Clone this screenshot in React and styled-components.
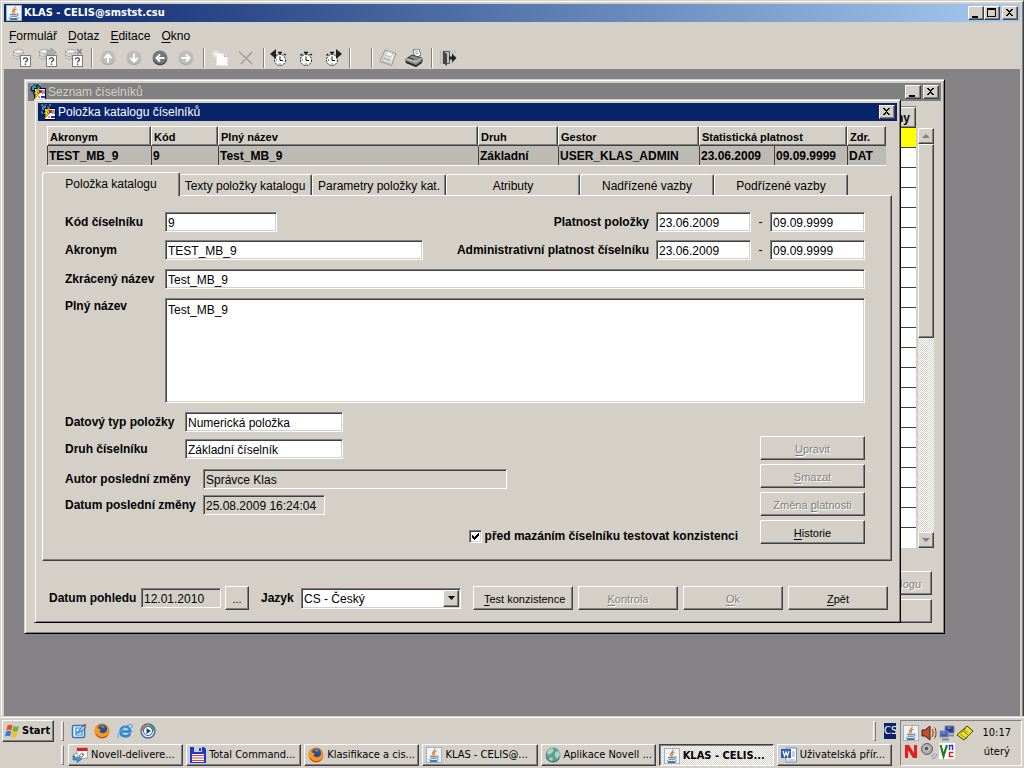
import React from 'react';
import styled, {createGlobalStyle, css} from 'styled-components';

const face = '#d4d0c8';
const uiFont = '"Liberation Sans", Arial, sans-serif';
const sysFont = '"DejaVu Sans Condensed", "DejaVu Sans", sans-serif';

const checkMark = `url("data:image/svg+xml,%3Csvg xmlns='http://www.w3.org/2000/svg' width='9' height='9' shape-rendering='crispEdges'%3E%3Cpath d='M1 3v3h1v1h1v1h1v-1h1v-1h1v-1h1v-1h1v-3h-1v1h-1v1h-1v1h-1v1h-1v-1h-1v-1z'/%3E%3C/svg%3E")`;
const checker = 'repeating-conic-gradient(#fff 0 25%, #d4d0c8 0 50%)';

const raised = css`
    border: 1px solid;
    border-color: #fff #404040 #404040 #fff;
    box-shadow: inset -1px -1px #808080;
`;
const sunken = css`
    border: 1px solid;
    border-color: #808080 #fff #fff #808080;
    box-shadow: inset 1px 1px #404040, inset -1px -1px ${face};
`;

/* ---------- icons ---------- */

const Icon = ({size = 16, w, h, children}) => (
    <svg width={w || size} height={h || size} viewBox={`0 0 ${w || size} ${h || size}`} aria-hidden="true">
        {children}
    </svg>
);

const JavaIcon = () => (
    <Icon>
        <rect x="0.5" y="0.5" width="15" height="15" fill="#eef3f8" stroke="#9db2c6" />
        <path d="M9 1.5C9.8 3.8 6 4.6 6.6 6.8L7.6 8.4M10.6 4C8 5 7.6 6 8.8 7.6" fill="none" stroke="#e8781e" strokeWidth="1.2" />
        <path d="M4 9.3H10.5M4.6 11.2H10M10.6 9c2.4-.4 2 2-.4 2.3M2.8 12.8c2 1 8 1 9.8 0M4 14.5h7.5" fill="none" stroke="#4a6d94" strokeWidth="1" />
    </Icon>
);

const FormIcon = () => (
    <Icon>
        <circle cx="6" cy="5.500" r="5.500" fill="#101878" />
        <path d="M2 3l2-2 2 1v2L4 6H2zM7 2l3 1v2H8zM1 7l2 1v2L1 9z" fill="#3a9a8a" />
        <path d="M1 1h2M9 1h2M5 0h2" stroke="#8ec8e0" />
        <path d="M4.500 4.500h11v11h-11z" fill="#fff" stroke="#000" />
        <path d="M9 6h3v3H9z" fill="#d81818" />
        <path d="M12 7h3M12 9h3" stroke="#2030d0" />
        <path d="M11 12h4v2h-4z" fill="#2030d0" />
        <path d="M8 13h2" stroke="#d81818" />
        <path d="M8 4L3.500 10H6l-2 5.500L9.500 9H7l3-5z" fill="#ffe800" stroke="#303000" strokeWidth=".6" />
    </Icon>
);

const QueryIcon = ({mark}) => (
    <Icon w={20} h={20}>
        <path d="M1.500 3.500c0-3 10-3 10 0v6c0 2-10 2-10 0z" fill="#dddbd6" stroke="#9c9a95" strokeDasharray="2 1" />
        <ellipse cx="6.500" cy="3.500" rx="4.500" ry="2" fill="#f4f3f0" stroke="#a5a39e" strokeWidth=".8" />
        <path d="M7 5.500v5M9.500 5v5M2 7.500c2 1.500 7 1.500 9 0" fill="none" stroke="#b0aeaa" />
        {mark === 'arrow' && <path d="M9 2.500h4V0l5.500 4.500L13 8.500V6l-4 .5z" fill="#b0aea9" stroke="#8c8a86" strokeWidth=".6" />}
        {mark === 'cross' && <path d="M13 1l5 5M18 1l-5 5" stroke="#85837e" strokeWidth="1.500" />}
        <rect x="8.500" y="7.500" width="10" height="11" fill="#fff" stroke="#7c7a76" />
        <path d="M11.500 11.500c0-2.500 4.500-2 4 .3-.2 1.300-2 1-2 2.700M13.500 15.500v1.500" fill="none" stroke="#505050" strokeWidth="1.400" />
    </Icon>
);

const ArrowIcon = ({turn, on}) => (
    <Icon>
        <circle cx="8" cy="8" r="7.500" fill={on ? '#77767a' : '#bfbdb9'} />
        <path d="M1.500 10a7 7 0 0 0 13 0" fill="none" stroke={on ? '#3c3c40' : '#a8a6a2'} />
        <g transform={`rotate(${turn} 8 8)`}>
            <path d="M8 12.500V4.500M4.500 8L8 4.500 11.500 8" fill="none" stroke="#fff" strokeWidth="2" />
        </g>
    </Icon>
);

const NewIcon = () => (
    <Icon>
        <path d="M4.500 3.500H12l3.500 3V15.500h-11z" fill="#fff" stroke="#e6e4df" />
        <path d="M12 3.500v3h3.500" fill="#d8d6d2" stroke="#c2c0bc" />
        <path d="M4 0v8M0 4h8M1 1l6 6M7 1L1 7" stroke="#f7f6f2" />
    </Icon>
);

const DeleteIcon = () => (
    <Icon>
        <path d="M1 2l13 12M14 2L3 14" stroke="#a3a19d" strokeWidth="1.800" fill="none" />
        <path d="M1 3l12 12" stroke="#fff" strokeWidth=".4" />
    </Icon>
);

const ClockIcon = ({side}) => (
    <Icon w={20} h={18}>
        <circle cx="10" cy="11" r="5.500" fill="#fff" stroke="#222" strokeDasharray="2 1" />
        <path d="M8 3.500h4M10 3v3M14 5l2 1M6 5L4.500 6.500" stroke="#111" strokeWidth="1.300" fill="none" />
        <path d="M10 7.500V11.500h3M6 11h1M10 14.500v1" stroke="#111" fill="none" />
        {side === 'left' && <path d="M6 0v10L0 5z" fill="#222" />}
        {side === 'right' && <path d="M14 0v10l6-5z" fill="#222" />}
    </Icon>
);

const SaveIcon = () => (
    <Icon w={18} h={18}>
        <path d="M6 1l11 3.500-4.500 12L1 12.500z" fill="#dedcd8" stroke="#999793" />
        <path d="M8 2l6 2-2 4-6-2z" fill="#f6f5f2" stroke="#b0aeaa" strokeWidth=".7" />
        <path d="M5 9l7 2.500-1.500 4L3.500 13z" fill="#c8c6c2" stroke="#a3a19d" strokeWidth=".7" />
        <path d="M4 11l6 2M14 6l-3 8" stroke="#fff" strokeWidth=".8" />
    </Icon>
);

const PrintIcon = () => (
    <Icon w={18} h={18}>
        <path d="M8 1l6-1 2 6-6 3z" fill="#fff" stroke="#555" strokeWidth=".8" />
        <path d="M10 3l3-.5M10.500 5l3-.7" stroke="#777" strokeWidth=".8" />
        <path d="M1 10l6-4 10 3v4l-6 4.500-10-4z" fill="#8d8c8a" stroke="#222" strokeWidth=".8" />
        <path d="M1 10l10 3 6-4" fill="none" stroke="#d8d6d2" />
        <path d="M1 12l10 4 6-4v2l-6 4-10-4z" fill="#2c2c2c" />
        <path d="M3 8.500l6 2" stroke="#333" />
    </Icon>
);

const ExitIcon = () => (
    <Icon w={18} h={18}>
        <path d="M1 2h16M1 4h3M1 6h3M1 8h3M1 10h3M1 12h3M1 14h3M12 4h5M12 14h4" stroke="#a5a3a0" strokeDasharray="1 1" />
        <path d="M4.500 2.500h6v12h-6z" fill="#c2c0bc" stroke="#555" />
        <path d="M4 2l4 3v12l-4-3z" fill="#444" />
        <path d="M10 7.500h3V4.500l4.500 4.500-4.500 4.500v-3h-3z" fill="#222" />
    </Icon>
);

const FirefoxIcon = () => (
    <Icon>
        <circle cx="8" cy="8" r="7.500" fill="#e07818" />
        <circle cx="8.500" cy="6.500" r="4.700" fill="#28508c" />
        <path d="M6 3c2-1 4-.5 5 1L8.500 5z" fill="#5c98cc" />
        <path d="M1 3.500c1.500.3 3 1 3.500 2.300L7 6.500 5.500 8c.5 2.500 4 2.800 6 1.500 2-1.500 2-4 1-6.500 3 3 3 8-.5 10.800C7 17 0 13.500.5 8z" fill="#f59a22" />
        <path d="M2 11c2 4 8 5 11.500 1.500" fill="none" stroke="#b83c10" />
    </Icon>
);

const IeIcon = () => (
    <Icon>
        <path d="M13 10.500c-1.500 4-9.500 4-9.500-2 0-6 9.500-6.500 9.800 0H5" fill="none" stroke="#2a86d8" strokeWidth="2.600" />
        <path d="M1.500 15C-1 11 9 1 14.500 1.500c1.300.5.8 2 0 3.500" fill="none" stroke="#58a8e8" strokeWidth="1.200" />
    </Icon>
);

const MailIcon = () => (
    <Icon>
        <rect x="1.500" y="2.500" width="12" height="12" rx="1.500" fill="#e8f4fc" stroke="#2878c0" strokeWidth="1.500" />
        <path d="M10 5H5v7h6V8M6 10l6-7 2.500 1.500L8 10z" fill="#fff" stroke="#3088c8" strokeWidth="1.200" />
        <path d="M12 2l2-1.500 1.500 1.500L14 4z" fill="#d84820" />
    </Icon>
);

const MediaIcon = () => (
    <Icon>
        <circle cx="8" cy="8" r="7" fill="#e6ecf4" stroke="#44689c" strokeWidth="1.400" />
        <path d="M8 1.500A6.500 6.500 0 0 1 14.500 8H11z" fill="#48a848" />
        <path d="M8 1.500A6.500 6.500 0 0 0 1.500 8H5z" fill="#e87030" />
        <circle cx="8" cy="8" r="4.500" fill="#fff" stroke="#2c58a8" />
        <path d="M6.500 5v6L11 8z" fill="#1c3c98" />
    </Icon>
);

const WindowsIcon = () => (
    <Icon>
        <path d="M2.500 2.500c2-1 3.500-1 5 0L6.300 7.500c-1.500-1-3-1-5 0z" fill="#e8501c" />
        <path d="M8.500 3c2 1 3.500 1 5.500 0l-1.200 5c-2 1-3.500 1-5.300 0z" fill="#6cb82c" />
        <path d="M1.200 8.500c2-1 3.500-1 5 0L5 13.500c-1.500-1-3-1-5 0z" fill="#3c78d8" />
        <path d="M7.200 9c2 1 3.500 1 5.300 0l-1.200 5c-2 1-3.500 1-5.300 0z" fill="#f4bc1c" />
    </Icon>
);

const NovellIcon = () => (
    <Icon>
        <path d="M5 1h10.500v10H5z" fill="#fff" stroke="#909090" strokeWidth=".7" />
        <path d="M5 1h10.500v3H5z" fill="#e02020" />
        <path d="M7 9l3-3 2 1-2 3zM9 6l3 3" fill="none" stroke="#707070" strokeWidth=".8" />
        <path d="M1 8l4-2 3 4-4 2z" fill="#fff" stroke="#777" strokeWidth=".7" />
        <path d="M1 9v4h4v2.500l5-3.500-5-2.500V11H3V9z" fill="#38a0e0" stroke="#1c5c90" strokeWidth=".6" />
    </Icon>
);

const DiskIcon = () => (
    <Icon>
        <path d="M0 0h14l2 2v14H0z" fill="#1c3cc8" />
        <path d="M4 0h8v5H4z" fill="#c8d0e0" />
        <path d="M9 1h2v3H9z" fill="#1c3cc8" />
        <path d="M2 7h12v8H2z" fill="#fff" />
        <path d="M2 8.500h12M2 11h12M2 13.500h12" stroke="#e04040" />
    </Icon>
);

const GlobeIcon = () => (
    <Icon>
        <circle cx="8" cy="8" r="7.500" fill="#5f9c94" />
        <path d="M3 3l4-2 2 2-2 3-3 2-2-2zM10 5l4-1 1 4-3 4-2-3zM5 10l3 1-1 3-3-1z" fill="#a8d4c4" />
        <path d="M1 10a7.500 7.500 0 0 0 13 2" fill="none" stroke="#3c6c70" />
    </Icon>
);

const WordIcon = () => (
    <Icon>
        <path d="M5 1h10.500v14H5z" fill="#fff" stroke="#6888c0" />
        <path d="M11 5h3M11 7h3M11 9h3M7 13h7" stroke="#88a0c8" />
        <path d="M0 2h10v9H0z" fill="#2c5cb4" />
        <path d="M2 4l1.500 5L5 5l1.500 4L8 4" fill="none" stroke="#fff" strokeWidth="1.200" />
    </Icon>
);

const SoundIcon = () => (
    <Icon>
        <path d="M1 5h3l5-4v14l-5-4H1z" fill="#c05030" stroke="#501808" />
        <path d="M11 4c1.500 2 1.500 6 0 8M13.500 2.500c2 3 2 8 0 11" fill="none" stroke="#803010" />
    </Icon>
);

const NetworkIcon = () => (
    <Icon>
        <path d="M6 1h9v7H6z" fill="#2c3c8c" stroke="#8088a0" />
        <path d="M1 6h8v6H1z" fill="#4058b8" stroke="#8890a8" />
        <path d="M3 14.500h7M9 10.500h6" stroke="#8088a0" strokeWidth="2" />
        <path d="M8 3h4M2.500 8h4" stroke="#90a8e8" />
    </Icon>
);

const TagIcon = () => (
    <Icon>
        <path d="M0 10L10 1l6 5-9 9z" fill="#f0e020" stroke="#404000" />
        <path d="M3 9l7 5M6 6l6 5M9 3l-5 5" stroke="#807800" strokeWidth=".8" />
        <path d="M8 5l3 2-2 2z" fill="#fff" stroke="#555" strokeWidth=".5" />
    </Icon>
);

const RedNIcon = () => (
    <Icon>
        <path d="M2 2v13h3V7l5 8h4V2h-3v8L6 2z" fill="#e81c1c" />
    </Icon>
);

const SpeakerIcon = () => (
    <Icon>
        <circle cx="6" cy="6" r="5.500" fill="#a8a8a8" stroke="#606060" />
        <circle cx="5.500" cy="5.500" r="2.500" fill="#585858" stroke="#ddd" />
        <path d="M10 13c2 0 3-1 3.500-3M11 15.500c3 0 4.500-2 4.700-4.500" fill="none" stroke="#7088d0" />
    </Icon>
);

const VncIcon = () => (
    <Icon>
        <rect width="16" height="16" fill="#fff" />
        <path d="M1.500 2L4.500 13 8 2" fill="none" stroke="#188018" strokeWidth="2.200" />
        <path d="M10.500 7V2.500h3V7" fill="none" stroke="#2038d0" strokeWidth="1.500" />
        <path d="M14.500 9.500h-4v4h4" fill="none" stroke="#d82020" strokeWidth="1.500" />
    </Icon>
);

const glyphs = {
    minimize: <path d="M3 9h6v2H3z" />,
    maximize: <path d="M2 1h9v9H2zM3 3v6h7V3z" fillRule="evenodd" />,
    close: <path d="M3 2h2v1h1v1h1v-1h1v-1h2v1h-1v1h-1v1h-1v1h1v1h1v1h1v1h-2v-1h-1v-1h-1v1h-1v1h-2v-1h1v-1h1v-1h1v-1h-1v-1h-1v-1h-1z" />,
};

/* ---------- small building blocks ---------- */

const CaptionButton = ({kind}) => (
    <CaptionButtonStyled type="button" aria-label={kind}>
        <svg width="14" height="12" viewBox="0 0 14 12" shapeRendering="crispEdges">{glyphs[kind]}</svg>
    </CaptionButtonStyled>
);

const Field = ({id, label, labelWidth, width, readOnly, value}) => (
    <FieldRow>
        <Label htmlFor={id} $width={labelWidth}>{label}</Label>
        <TextBox id={id} $width={width} $flat={readOnly} readOnly={readOnly} defaultValue={value} />
    </FieldRow>
);

const DateRange = ({id, label, from, to}) => (
    <FieldRow>
        <Label htmlFor={id} $end>{label}</Label>
        <TextBox id={id} $width={95} defaultValue={from} />
        <Dash>-</Dash>
        <TextBox aria-label={label} $width={95} defaultValue={to} />
    </FieldRow>
);

const columns = [104, 67, null, 80, 141, 75, 73, 39];
const tabs = ['Texty položky katalogu', 'Parametry položky kat.', 'Atributy', 'Nadřízené vazby', 'Podřízené vazby'];
const tasks = [
    {icon: <NovellIcon />, text: 'Novell-delivere...'},
    {icon: <DiskIcon />, text: 'Total Command...'},
    {icon: <FirefoxIcon />, text: 'Klasifikace a cis...'},
    {icon: <JavaIcon />, text: 'KLAS - CELIS@...'},
    {icon: <GlobeIcon />, text: 'Aplikace Novell ...'},
    {icon: <JavaIcon />, text: 'KLAS - CELIS...', active: true},
    {icon: <WordIcon />, text: 'Uživatelská přír...'},
];

function Toolbar() {
    return (
        <ToolbarStyled>
            <Tool><QueryIcon /></Tool>
            <Tool><QueryIcon mark="arrow" /></Tool>
            <Tool><QueryIcon mark="cross" /></Tool>
            <Divider />
            <Tool><ArrowIcon turn={0} /></Tool>
            <Tool><ArrowIcon turn={180} /></Tool>
            <Tool><ArrowIcon turn={270} on /></Tool>
            <Tool><ArrowIcon turn={90} /></Tool>
            <Divider />
            <Tool><NewIcon /></Tool>
            <Tool><DeleteIcon /></Tool>
            <Divider />
            <Tool><ClockIcon side="left" /></Tool>
            <Tool><ClockIcon /></Tool>
            <Tool><ClockIcon side="right" /></Tool>
            <Divider />
            <Divider $wide />
            <Tool><SaveIcon /></Tool>
            <Tool><PrintIcon /></Tool>
            <Divider />
            <Tool><ExitIcon /></Tool>
        </ToolbarStyled>
    );
}

function ListWindow() {
    return (
        <MdiWindow $left={20} $top={10} $width={921}>
            <TitleBar $inactive>
                <FormIcon />
                <WindowTitle>Seznam číselníků</WindowTitle>
                <CaptionButton kind="minimize" />
                <CaptionButton kind="close" />
            </TitleBar>
            <ListBody>
                <ListGrid>
                    <ListHead>ny</ListHead>
                    <ListRow $selected />
                    {Array.from({length: 20}, (_, i) => <ListRow key={i} />)}
                </ListGrid>
                <ScrollBar>
                    <ScrollButton type="button" aria-label="up">
                        <svg width="8" height="4"><path d="M4 0l4 4H0z" fill="#808080" /></svg>
                    </ScrollButton>
                    <ScrollThumb />
                    <ScrollTrack />
                    <ScrollButton type="button" aria-label="down">
                        <svg width="8" height="4"><path d="M0 0h8L4 4z" fill="#808080" /></svg>
                    </ScrollButton>
                </ScrollBar>
            </ListBody>
            <ListActions>
                <Button disabled $width={105} $end>logu</Button>
                <Button disabled $width={105} />
            </ListActions>
        </MdiWindow>
    );
}

function DetailWindow() {
    return (
        <MdiWindow $left={30} $top={30} $width={867}>
            <TitleBar>
                <FormIcon />
                <WindowTitle>Položka katalogu číselníků</WindowTitle>
                <CaptionButton kind="close" />
            </TitleBar>
            <Summary>
                <colgroup>
                    {columns.map((width, i) => <col key={i} width={width || undefined} />)}
                </colgroup>
                <thead>
                    <tr>
                        <th>Akronym</th>
                        <th>Kód</th>
                        <th>Plný název</th>
                        <th>Druh</th>
                        <th>Gestor</th>
                        <th colSpan={2}>Statistická platnost</th>
                        <th>Zdr.</th>
                    </tr>
                </thead>
                <tbody>
                    <tr>
                        <td>TEST_MB_9</td>
                        <td>9</td>
                        <td>Test_MB_9</td>
                        <td>Základní</td>
                        <td>USER_KLAS_ADMIN</td>
                        <td>23.06.2009</td>
                        <td>09.09.9999</td>
                        <td>DAT</td>
                    </tr>
                </tbody>
            </Summary>
            <TabList role="tablist">
                <Tab type="button" role="tab" aria-selected="true" $active>Položka katalogu</Tab>
                {tabs.map(tab => <Tab key={tab} type="button" role="tab">{tab}</Tab>)}
            </TabList>
            <Panel>
                <PanelTop>
                    <Stack $gap={8}>
                        <Field id="kod" label="Kód číselníku" labelWidth={100} width={112} value="9" />
                        <Field id="akronym" label="Akronym" labelWidth={100} width={258} value="TEST_MB_9" />
                    </Stack>
                    <Stack $gap={8}>
                        <DateRange id="platnost" label="Platnost položky" from="23.06.2009" to="09.09.9999" />
                        <DateRange id="admin" label="Administrativní platnost číselníku" from="23.06.2009" to="09.09.9999" />
                    </Stack>
                </PanelTop>
                <Field id="zkraceny" label="Zkrácený název" labelWidth={100} value="Test_MB_9" />
                <FieldRow $top>
                    <Label htmlFor="plny" $width={100}>Plný název</Label>
                    <TextArea id="plny" defaultValue="Test_MB_9" />
                </FieldRow>
                <PanelBottom>
                    <Stack $gap={10} $grow>
                        <Stack $gap={7}>
                            <Field id="typ" label="Datový typ položky" labelWidth={120} width={158} value="Numerická položka" />
                            <Field id="druh" label="Druh číselníku" labelWidth={120} width={158} value="Základní číselník" />
                        </Stack>
                        <Stack $gap={6}>
                            <Field id="autor" label="Autor poslední změny" labelWidth={138} width={304} readOnly value="Správce Klas" />
                            <Field id="datum" label="Datum poslední změny" labelWidth={138} width={122} readOnly value="25.08.2009 16:24:04" />
                        </Stack>
                    </Stack>
                    <Confirm>
                        <CheckBox type="checkbox" id="test" defaultChecked />
                        <Label htmlFor="test">před mazáním číselníku testovat konzistenci</Label>
                    </Confirm>
                    <SideButtons>
                        <Button disabled $width={105}><u>U</u>pravit</Button>
                        <Button disabled $width={105}><u>S</u>mazat</Button>
                        <Button disabled $width={105}>Změna <u>p</u>latnosti</Button>
                        <Button $width={105}><u>H</u>istorie</Button>
                    </SideButtons>
                </PanelBottom>
            </Panel>
            <Footer>
                <Label htmlFor="pohled" $width={92}>Datum pohledu</Label>
                <TextBox id="pohled" $width={80} $flat readOnly defaultValue="12.01.2010" />
                <Button $width={24}>...</Button>
                <Label htmlFor="jazyk" $width={32}>Jazyk</Label>
                <SelectBox>
                    <select id="jazyk" defaultValue="cs">
                        <option value="cs">CS - Český</option>
                    </select>
                    <SelectArrow>
                        <svg width="7" height="4"><path d="M0 0h7L3.500 4z" /></svg>
                    </SelectArrow>
                </SelectBox>
                <FooterButtons>
                    <Button><u>T</u>est konzistence</Button>
                    <Button disabled><u>K</u>ontrola</Button>
                    <Button disabled><u>O</u>k</Button>
                    <Button><u>Z</u>pět</Button>
                </FooterButtons>
            </Footer>
        </MdiWindow>
    );
}

function Taskbar() {
    return (
        <TaskbarStyled>
            <StartButton type="button"><WindowsIcon />Start</StartButton>
            <Bands>
                <Band>
                    <Grip />
                    <QuickLaunch>
                        <MailIcon />
                        <FirefoxIcon />
                        <IeIcon />
                        <MediaIcon />
                    </QuickLaunch>
                    <Grip />
                    <Language>CS</Language>
                </Band>
                <Band>
                    <Grip />
                    <TaskList>
                        {tasks.map((task, i) => (
                            <TaskButton key={i} type="button" $active={task.active}>
                                {task.icon}
                                <span>{task.text}</span>
                            </TaskButton>
                        ))}
                    </TaskList>
                </Band>
            </Bands>
            <Tray>
                <TrayIcons>
                    <JavaIcon />
                    <SoundIcon />
                    <NetworkIcon />
                    <TagIcon />
                    <RedNIcon />
                    <SpeakerIcon />
                    <VncIcon />
                </TrayIcons>
                <Clock>
                    <span>10:17</span>
                    <span>úterý</span>
                </Clock>
            </Tray>
        </TaskbarStyled>
    );
}

function App() {
    return (
        <Screen>
            <GlobalStyle />
            <MainWindow>
                <TitleBar $main>
                    <JavaIcon />
                    <WindowTitle $bold>KLAS - CELIS@smstst.csu</WindowTitle>
                    <ButtonPair>
                        <CaptionButton kind="minimize" />
                        <CaptionButton kind="maximize" />
                    </ButtonPair>
                    <CaptionButton kind="close" />
                </TitleBar>
                <MenuBar>
                    <button type="button"><u>F</u>ormulář</button>
                    <button type="button"><u>D</u>otaz</button>
                    <button type="button"><u>E</u>ditace</button>
                    <button type="button"><u>O</u>kno</button>
                </MenuBar>
                <Toolbar />
                <Workspace>
                    <ListWindow />
                    <DetailWindow />
                </Workspace>
            </MainWindow>
            <Taskbar />
        </Screen>
    );
}

/* ---------- styles ---------- */

const GlobalStyle = createGlobalStyle`
    *{
        box-sizing: border-box;
    }
    body{
        margin: 0;
        background: ${face};
        color: #000;
        font: 12px/16px ${uiFont};
    }
    button, input, select, textarea{
        margin: 0;
        padding: 0;
        border: 0;
        border-radius: 0;
        outline: 0;
        color: inherit;
        background: none;
        font: inherit;
    }
    svg{
        display: block;
        flex: none;
    }
    u{
        text-underline-offset: 2px;
    }
`;

const Screen = styled.div`
    display: flex;
    flex-direction: column;
    height: 100vh;
    overflow: hidden;
`;

const MainWindow = styled.div`
    flex: 1;
    min-height: 0;
    display: flex;
    flex-direction: column;
    padding: 3px 3px 0;
    border: 1px solid;
    border-width: 1px 1px 0;
    border-color: ${face} #404040 ${face} ${face};
    box-shadow: inset 1px 1px #fff, inset -1px 0 #808080;
`;

const TitleBar = styled.div`
    display: flex;
    align-items: center;
    gap: 2px;
    height: 18px;
    padding: 0 2px;
    color: ${p => p.$inactive ? face : '#fff'};
    background: ${p => p.$inactive ? '#808080' : '#0a246a'};
    ${p => p.$main && 'background: linear-gradient(90deg, #0a246a, #a6caf0);'}
`;

const WindowTitle = styled.span`
    flex: 1;
    white-space: nowrap;
    ${p => p.$bold && css`font: bold 11px/16px ${sysFont};`}
`;

const ButtonPair = styled.div`
    display: flex;
`;

const CaptionButtonStyled = styled.button`
    width: 16px;
    height: 14px;
    background: ${face};
    ${raised}
`;

const MenuBar = styled.div`
    display: flex;
    gap: 11px;
    height: 25px;
    padding: 2px 5px 0;
`;

const ToolbarStyled = styled.div`
    display: flex;
    align-items: center;
    height: 22px;
    padding-left: 5px;
`;

const Tool = styled.button`
    display: flex;
    align-items: center;
    justify-content: center;
    width: 26px;
    height: 22px;
`;

const Divider = styled.span`
    width: 2px;
    height: 20px;
    margin: 0 2px 0 ${p => p.$wide ? 18 : 4}px;
    border-left: 1px solid #808080;
    border-right: 1px solid #fff;
`;

const Workspace = styled.div`
    position: relative;
    flex: 1;
    overflow: hidden;
    background: #848284;
`;

const MdiWindow = styled.section`
    position: absolute;
    left: ${p => p.$left}px;
    top: ${p => p.$top}px;
    width: ${p => p.$width}px;
    padding: 3px;
    background: ${face};
    border: 1px solid;
    border-color: ${face} #000 #000 ${face};
    box-shadow: inset 1px 1px #fff, inset -1px -1px #808080;
`;

const ListBody = styled.div`
    display: flex;
    gap: 1px;
    padding: 5px 7px 0 12px;
`;

const ListGrid = styled.div`
    flex: 1;
    border: 1px solid;
    border-color: #808080 ${face} #fff #808080;
`;

const ListHead = styled.div`
    height: 21px;
    padding: 2px 5px 0;
    font-weight: bold;
    text-align: right;
    ${raised}
`;

const ListRow = styled.div`
    height: 20px;
    background: ${p => p.$selected ? '#ff0' : '#fff'};
    border-bottom: 1px solid #404040;

    &:last-child{
        height: 19px;
        border-bottom: 0;
    }
`;

const ScrollBar = styled.div`
    display: flex;
    flex-direction: column;
    width: 16px;
    margin-top: 22px;
`;

const ScrollButton = styled.button`
    display: flex;
    align-items: center;
    justify-content: center;
    height: 16px;
    background: ${face};
    ${raised}
`;

const ScrollThumb = styled.div`
    height: 194px;
    background: ${face};
    ${raised}
`;

const ScrollTrack = styled.div`
    flex: 1;
    background: ${checker} 0 0 / 2px 2px;
`;

const ListActions = styled.div`
    display: flex;
    flex-direction: column;
    align-items: flex-end;
    gap: 4px;
    padding: 23px 9px 7px;
`;

const Button = styled.button.attrs({type: 'button'})`
    width: ${p => p.$width || 100}px;
    height: 24px;
    padding: 2px 10px 0;
    font-size: 11px;
    white-space: nowrap;
    text-align: ${p => p.$end ? 'right' : 'center'};
    background: ${face};
    ${raised}
    ${p => p.$width === 24 && 'padding: 2px 0 0;'}

    &:disabled{
        color: #808080;
        text-shadow: 1px 1px #fff;
    }
`;

const Summary = styled.table`
    table-layout: fixed;
    width: calc(100% - 20px);
    margin: 5px 11px 0 9px;
    border-collapse: separate;
    border-spacing: 0;
    border-bottom: 1px solid #fff;
    font-weight: bold;

    th, td{
        padding: 0 0 0 2px;
        text-align: left;
        white-space: nowrap;
        overflow: hidden;
    }
    th{
        height: 20px;
        padding: 2px 0 0 2px;
        font-size: 11px;
        ${raised}
    }
    td{
        height: 19px;
        background: #bdbab3;
        border-left: 1px solid #404040;
        padding-left: 1px;
    }
`;

const TabList = styled.div`
    display: flex;
    align-items: flex-end;
    height: 23px;
    margin: 6px 0 0 4px;
`;

const Tab = styled.button`
    position: relative;
    width: 134px;
    height: 21px;
    padding-top: 2px;
    white-space: nowrap;
    background: ${face};
    border: 1px solid;
    border-color: #fff #404040 #fff #fff;
    border-bottom: 0;
    border-radius: 3px 2px 0 0;
    box-shadow: inset -1px 0 #808080;
    ${p => p.$active && css`
        width: 138px;
        height: 24px;
        margin: 0 -2px -1px 0;
        padding: 0 0 1px;
        z-index: 1;
    `}
`;

const Panel = styled.div`
    display: flex;
    flex-direction: column;
    gap: 9px;
    margin: 0 5px 0 4px;
    padding: 16px 26px 16px 22px;
    ${raised}
`;

const PanelTop = styled.div`
    display: flex;
    justify-content: space-between;
`;

const PanelBottom = styled.div`
    display: flex;
    align-items: flex-start;
    height: 132px;
`;

const Stack = styled.div`
    display: flex;
    flex-direction: column;
    gap: ${p => p.$gap}px;
    ${p => p.$grow && 'flex: 1; min-width: 0;'}
`;

const FieldRow = styled.div`
    display: flex;
    align-items: ${p => p.$top ? 'flex-start' : 'center'};
`;

const Label = styled.label`
    flex: none;
    width: ${p => p.$width ? `${p.$width}px` : 'auto'};
    ${p => p.$end && 'margin: 0 7px 0 auto;'}
    font-weight: bold;
    white-space: nowrap;
`;

const TextBox = styled.input`
    flex: ${p => p.$width ? `0 0 ${p.$width}px` : 1};
    width: ${p => p.$width ? `${p.$width}px` : 'auto'};
    height: 20px;
    padding: 2px 2px 0;
    background: ${p => p.$flat ? face : '#fff'};
    ${sunken}
`;

const TextArea = styled.textarea`
    flex: 1;
    height: 105px;
    padding: 3px 2px;
    resize: none;
    background: #fff;
    ${sunken}
`;

const Dash = styled.span`
    width: 19px;
    text-align: center;
`;

const Confirm = styled.div`
    flex: none;
    display: flex;
    align-items: center;
    align-self: flex-end;
    gap: 3px;
    margin-right: 22px;
`;

const CheckBox = styled.input`
    appearance: none;
    width: 13px;
    height: 13px;
    background: #fff;
    ${sunken}

    &:checked{
        background: #fff ${checkMark} 1px 1px no-repeat;
    }
`;

const SideButtons = styled.div`
    flex: none;
    display: flex;
    flex-direction: column;
    align-self: flex-end;
    gap: 4px;
`;

const Footer = styled.div`
    display: flex;
    align-items: center;
    padding: 25px 9px 9px 11px;

    > button{
        margin: 0 12px 0 4px;
    }
`;

const SelectBox = styled.div`
    position: relative;
    margin-left: 8px;

    select{
        display: block;
        appearance: none;
        width: 160px;
        height: 21px;
        padding: 2px 18px 0 2px;
        background: #fff;
        ${sunken}
    }
`;

const SelectArrow = styled.span`
    position: absolute;
    top: 2px;
    right: 2px;
    display: flex;
    align-items: center;
    justify-content: center;
    width: 16px;
    height: 17px;
    pointer-events: none;
    background: ${face};
    ${raised}
`;

const FooterButtons = styled.div`
    display: flex;
    gap: 5px;
    margin-left: auto;
`;

const TaskbarStyled = styled.footer`
    display: flex;
    height: 52px;
    padding: 4px 2px 2px;
    background: ${face};
    box-shadow: inset 0 1px ${face}, inset 0 2px #fff;
    font: 11px/16px ${sysFont};
`;

const StartButton = styled.button`
    display: flex;
    align-items: center;
    gap: 1px;
    width: 52px;
    height: 22px;
    padding-left: 2px;
    font-weight: bold;
    ${raised}
`;

const Bands = styled.div`
    flex: 1;
    min-width: 0;
    display: flex;
    flex-direction: column;
    gap: 2px;
    margin-left: 7px;
`;

const Band = styled.div`
    display: flex;
    align-items: center;
    height: 22px;
`;

const Grip = styled.span`
    flex: none;
    width: 3px;
    height: 20px;
    border: 1px solid;
    border-color: #fff #808080 #808080 #fff;
`;

const QuickLaunch = styled.div`
    flex: 1;
    display: flex;
    gap: 7px;
    padding-left: 7px;
`;

const Language = styled.span`
    width: 12px;
    height: 16px;
    margin: 0 4px 0 8px;
    overflow: hidden;
    color: #fff;
    background: #0a246a;
`;

const TaskList = styled.div`
    flex: 1;
    min-width: 0;
    display: flex;
    gap: 3px;
    margin: 0 8px 0 4px;
`;

const TaskButton = styled.button`
    flex: 1;
    min-width: 0;
    display: flex;
    align-items: center;
    gap: 3px;
    height: 22px;
    padding: 0 3px;
    white-space: nowrap;
    overflow: hidden;
    ${raised}
    ${p => p.$active && css`
        padding: 2px 2px 0 4px;
        font-weight: bold;
        background: ${checker} 0 0 / 2px 2px;
        border-color: #404040 #fff #fff #404040;
        box-shadow: inset 1px 1px #808080;
    `}
`;

const Tray = styled.div`
    display: flex;
    justify-content: space-between;
    width: 122px;
    padding: 4px 10px 0 2px;
    border: 1px solid;
    border-color: #808080 #fff #fff #808080;
`;

const TrayIcons = styled.div`
    display: grid;
    grid-template-columns: repeat(4, 16px);
    grid-auto-rows: 16px;
    gap: 2px;
`;

const Clock = styled.div`
    display: flex;
    flex-direction: column;
    gap: 3px;
    text-align: center;
`;

export default App;
